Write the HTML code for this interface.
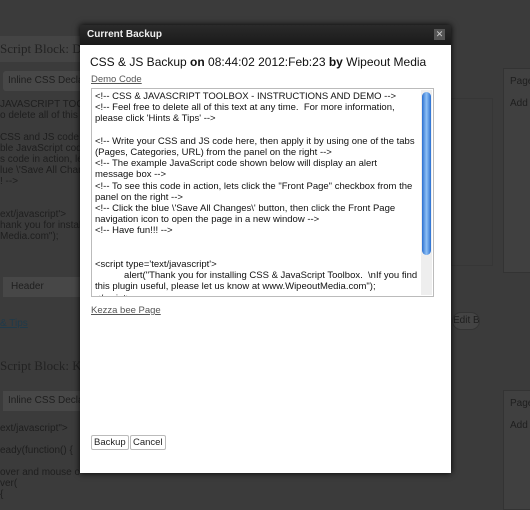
<!DOCTYPE html>
<html><head><style>
*{margin:0;padding:0;box-sizing:border-box}
body{width:530px;height:500px;overflow:hidden;background:#3b3b3b;font-family:"Liberation Sans",sans-serif;position:relative}
.bg{position:absolute;color:#1e1e1e;font-size:10px;line-height:11px;white-space:nowrap;overflow:hidden}
.dlg{position:absolute;left:80px;top:25px;width:371px;height:448px;background:#fff;box-shadow:0 0 6px #000}
.tb{height:20px;background:linear-gradient(#2a2a2a,#1a1a1a);color:#eee;font-size:10px;line-height:20px;padding-left:7px;font-weight:bold}
.x{position:absolute;right:6px;top:4px;width:11px;height:11px;background:#555;color:#ccc;font-size:9px;line-height:11px;text-align:center}
h1{position:absolute;left:10px;top:30px;font-size:12px;font-weight:normal;color:#111}
a{color:#555;text-decoration:underline;font-size:9.5px}
.ta{position:absolute;left:11px;top:63px;width:343px;height:209px;border:1px solid #bbb;overflow:hidden;font-size:9.5px;line-height:11.2px;color:#111;padding:2px 15px 0 3px;white-space:pre-wrap}
.sb{position:absolute;right:1px;top:1px;width:11px;height:205px;background:#eee}
.th{position:absolute;left:1px;top:2px;width:9px;height:163px;border-radius:5px;background:linear-gradient(90deg,#2a6fd0,#8ec0f5,#2a6fd0)}
.btn{position:absolute;top:410px;height:15px;border:1px solid #bbb;border-radius:2px;font-size:9.5px;line-height:13px;padding:0 2px;color:#222}
</style></head><body>
<div class="bg" style="left:0;top:36px;width:80px;height:26px;background:#444;font-family:'Liberation Serif',serif;font-size:13px;line-height:26px;color:#222">Script Block: Dem</div>
<div class="bg" style="left:3px;top:71px;width:80px;height:20px;background:#474747;border-radius:3px;line-height:20px;padding-left:5px">Inline CSS Declara</div>
<div class="bg" style="left:0;top:99px;width:80px">JAVASCRIPT TOOLBOX<br>o delete all of this tex<br><br>CSS and JS code he<br>ble JavaScript code s<br>s code in action, lets c<br>lue \'Save All Chang<br>! --><br><br><br>ext/javascript'><br>hank you for installin<br>Media.com");</div>
<div class="bg" style="left:3px;top:277px;width:80px;height:20px;background:#474747;line-height:20px;padding-left:8px">Header</div>
<div class="bg" style="left:0;top:318px;text-decoration:underline;color:#1f3a4a">&amp; Tips</div>
<div class="bg" style="left:0;top:353px;width:80px;font-family:'Liberation Serif',serif;font-size:13px;line-height:26px;color:#222">Script Block: Kezz</div>
<div class="bg" style="left:3px;top:391px;width:80px;height:20px;background:#474747;line-height:20px;padding-left:5px">Inline CSS Declara</div>
<div class="bg" style="left:0;top:423px;width:80px">ext/javascript"><br><br>eady(function() {<br><br>over and mouse out<br>ver(<br>{</div>
<div class="bg" style="left:503px;top:68px;width:30px;height:205px;border:1px solid #333;background:#404040;padding:7px 6px">Page<br><br>Add t</div>
<div class="bg" style="left:451px;top:98px;width:42px;height:168px;border:1px solid #363636"></div>
<div class="bg" style="left:452px;top:312px;width:28px;height:18px;border:1px solid #333;border-radius:9px;background:#444;line-height:16px">Edit Block Name</div>
<div class="bg" style="left:503px;top:390px;width:30px;height:120px;border:1px solid #333;background:#404040;padding:7px 6px">Page<br><br>Add t</div>
<div class="dlg">
<div class="tb">Current Backup</div><div class="x">✕</div>
<h1>CSS &amp; JS Backup <b>on</b> 08:44:02 2012:Feb:23 <b>by</b> Wipeout Media</h1>
<a style="position:absolute;left:11px;top:49px">Demo Code</a>
<div class="ta">&lt;!-- CSS &amp; JAVASCRIPT TOOLBOX - INSTRUCTIONS AND DEMO --&gt;
&lt;!-- Feel free to delete all of this text at any time.  For more information, please click 'Hints &amp; Tips' --&gt;

&lt;!-- Write your CSS and JS code here, then apply it by using one of the tabs (Pages, Categories, URL) from the panel on the right --&gt;
&lt;!-- The example JavaScript code shown below will display an alert message box --&gt;
&lt;!-- To see this code in action, lets click the "Front Page" checkbox from the panel on the right --&gt;
&lt;!-- Click the blue \'Save All Changes\' button, then click the Front Page navigation icon to open the page in a new window --&gt;
&lt;!-- Have fun!!! --&gt;


&lt;script type='text/javascript'&gt;
           alert("Thank you for installing CSS &amp; JavaScript Toolbox.  \nIf you find this plugin useful, please let us know at www.WipeoutMedia.com");
&lt;/script&gt;<div class="sb"><div class="th"></div></div></div>
<a style="position:absolute;left:11px;top:280px">Kezza bee Page</a>
<div class="btn" style="left:11px">Backup</div>
<div class="btn" style="left:50px">Cancel</div>
</div>
</body></html>
